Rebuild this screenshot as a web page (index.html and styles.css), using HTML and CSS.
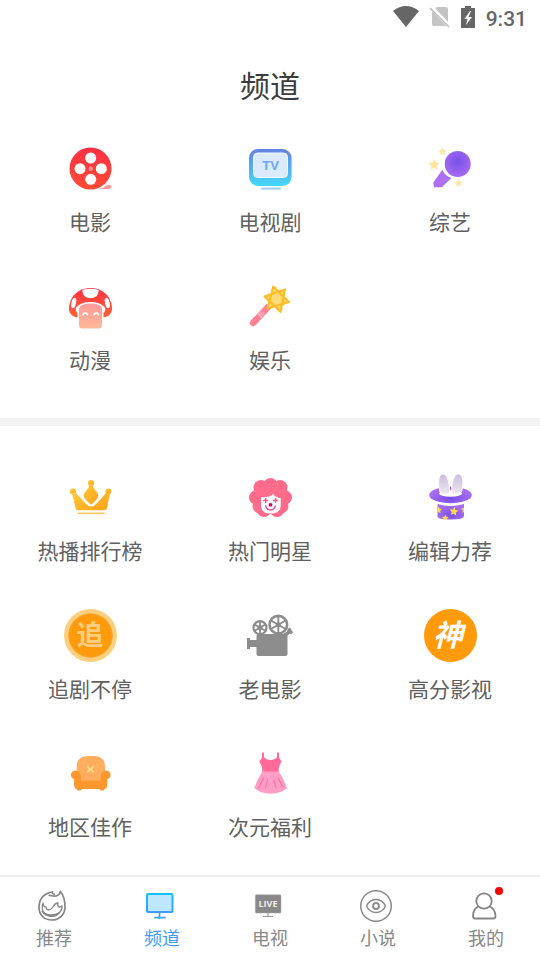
FILE: index.html
```html
<!DOCTYPE html>
<html lang="zh-CN">
<head>
  <meta charset="UTF-8">
  <meta name="viewport" content="width=device-width, initial-scale=1.0">
  <title>频道</title>
  <link rel="stylesheet" href="styles.css">
</head>
<body>

<div class="status-bar">
  <svg width="26" height="22" viewBox="0 0 26 22"><path d="M0 5Q13-5 26 5L13 21z" fill="#666"/></svg>
  <svg width="20" height="22" viewBox="0 0 20 22">
    <path d="M7 1h9q2 0 2 2v15q0 2-2 2H4q-2 0-2-2V6z" fill="#c4c4c4"/>
    <path d="M1 1l18 19" stroke="#fff" stroke-width="4"/>
    <path d="M0 2l19 19" stroke="#bbb" stroke-width="1.6"/>
  </svg>
  <svg width="14" height="22" viewBox="0 0 14 22">
    <path d="M4 0h6v2h4v20H0V2h4z" fill="#666"/>
    <path d="M9 5L3.500 13h3L5 19l6-8H7.500L10 5z" fill="#fff"/>
  </svg>
  <span class="time">9:31</span>
</div>

<main>
  <h1>频道</h1>

  <div class="grid">
    <a class="item" href="#">
      <svg class="icon" viewBox="0 0 54 54">
        <defs><linearGradient id="red" x1="0" y1="0" x2="0" y2="1"><stop offset="0" stop-color="#ff3045"/><stop offset="1" stop-color="#ff4b35"/></linearGradient></defs>
        <path d="M36 48q5-1 8-4 4-1 4.500 1.500 0 2.500-3 2.500z" fill="#ff9b98"/>
        <circle cx="27.500" cy="27.500" r="21" fill="url(#red)"/>
        <g fill="#fff"><circle cx="27.700" cy="17" r="5.500"/><circle cx="17" cy="27.700" r="5.500"/><circle cx="38.300" cy="27.700" r="5.500"/><circle cx="27.700" cy="38.300" r="5.500"/></g>
        <circle cx="27.700" cy="27.700" r="2.200" fill="#ff8f8f"/>
      </svg>
      <span>电影</span>
    </a>
    <a class="item" href="#">
      <svg class="icon" viewBox="0 0 54 54">
        <defs><linearGradient id="tv" x1="0" y1="0" x2="0" y2="1"><stop offset="0" stop-color="#6283e2"/><stop offset="1" stop-color="#45d9fa"/></linearGradient></defs>
        <rect x="6" y="8" width="42.600" height="37" rx="9" fill="url(#tv)"/>
        <rect x="10.500" y="12" width="34" height="24.500" rx="4" fill="#dbeaff" stroke="#f2f8ff"/>
        <text class="tv-text" x="27.500" y="28.500" text-anchor="middle" fill="#6ca5fa">TV</text>
        <path d="M19 47.700h18" stroke="#a5d2ff" stroke-width="2.200" stroke-linecap="round"/>
      </svg>
      <span>电视剧</span>
    </a>
    <a class="item" href="#">
      <svg class="icon" viewBox="0 0 54 54">
        <defs>
          <radialGradient id="mic" cy=".4"><stop offset="0" stop-color="#7650e8"/><stop offset="1" stop-color="#a067ef"/></radialGradient>
          <path id="star" d="M0-5L1.500-1.800 5-1.500 2.400 1 3.100 4.500 0 2.700-3.100 4.500-2.400 1-5-1.500-1.500-1.800z"/>
        </defs>
        <path d="M19.300 28.700Q22 35 28.500 37L20 45q-1 2-3 1l-1.500.5-2-.5-2.500.5-.7-5z" fill="#ae6ff2"/>
        <circle cx="34.700" cy="23" r="13" fill="url(#mic)"/>
        <g fill="#ffe5a0"><use href="#star" transform="translate(11 23.500) scale(1.150)"/><use href="#star" transform="translate(19.300 10.500) scale(.8)"/><use href="#star" transform="translate(35.500 42) scale(.8)"/></g>
      </svg>
      <span>综艺</span>
    </a>
    <a class="item" href="#">
      <svg class="icon" viewBox="0 0 54 54">
        <defs>
          <linearGradient id="cap" x1="0" y1="0" x2="0" y2="1"><stop offset="0" stop-color="#ff3044"/><stop offset="1" stop-color="#ff6334"/></linearGradient>
          <linearGradient id="stem" x1="0" y1="0" x2="0" y2="1"><stop offset="0" stop-color="#ff9a9a"/><stop offset="1" stop-color="#ffb996"/></linearGradient>
        </defs>
        <path d="M15 38.700C9 38 6 34 6 30 6 18 15 9 27.500 9S49 18 49 30q0 7-9 8.700z" fill="url(#cap)"/>
        <path d="M19.500 11q8-2.500 16 0c1 11-17 11-16 0z" fill="#fff"/>
        <ellipse cx="10.700" cy="24" rx="2.300" ry="5.300" transform="rotate(12 10.700 24)" fill="#fff"/>
        <ellipse cx="44.300" cy="24" rx="2.300" ry="5.300" transform="rotate(-12 44.300 24)" fill="#fff"/>
        <path d="M14.500 40V34q-3-3-1-6 5-5 14-5t14 5q2 3-1 6v6z" fill="#fff"/>
        <path d="M16 29q2-4.500 11.500-4.500T39 29v17q0 3.500-3.500 3.500h-16Q16 49.500 16 46z" fill="url(#stem)"/>
        <path d="M20 36.500c0-3.500 4.500-3.500 4.500 0M31 36.500c0-3.500 4.500-3.500 4.500 0" fill="none" stroke="#fff" stroke-width="1.500"/>
      </svg>
      <span>动漫</span>
    </a>
    <a class="item" href="#">
      <svg class="icon" viewBox="0 0 54 54">
        <path d="M10 44L26 27" stroke="#ff8294" stroke-width="6.500"/>
        <path d="M10 44l.5-.5" stroke="#ff8294" stroke-width="6.500" stroke-linecap="round"/>
        <path d="M17 36L20 33" stroke="#ff9dad" stroke-width="5"/>
        <path d="M14.500 34.500l4.500 4" stroke="#ffc0ca" stroke-width="1.300"/>
        <path d="M30.300 7.500L46 23 24.500 29.500z M42 10.500L37.500 32.800 21.500 17.500z" fill="#ffda76" stroke="#ffbd25" stroke-width="2.200" stroke-linejoin="round"/>
      </svg>
      <span>娱乐</span>
    </a>
  </div>

  <div class="grid more">
    <a class="item" href="#">
      <svg class="icon" viewBox="0 0 54 54">
        <defs><linearGradient id="gold" x1="0" y1="0" x2="1" y2="1"><stop offset="0" stop-color="#ffc83b"/><stop offset="1" stop-color="#ffa116"/></linearGradient></defs>
        <g fill="url(#gold)">
          <circle cx="10" cy="21.500" r="3"/><circle cx="28" cy="13" r="3"/><circle cx="45.300" cy="21.500" r="3"/>
          <path d="M9 23l3-1 10 11q6 7 12 0l10-11 3 1-3 15q-.5 2.300-3 2.300H15.500q-2.500 0-3-2.300z"/>
          <path d="M26.800 14h2.400q.8 4 3.800 7c3 3 3 6 0 9l-4 4q-1 .8-2 0l-4-4c-3-3-3-6 0-9q3-3 3.800-7z"/>
        </g>
        <path d="M15.500 43.300H41" stroke="#ffc866" stroke-width="1.800" stroke-linecap="round"/>
      </svg>
      <span>热播排行榜</span>
    </a>
    <a class="item" href="#">
      <svg class="icon" viewBox="0 0 54 54">
        <g fill="#ff6b8b"><circle cx="27.500" cy="15" r="7"/><circle cx="18" cy="17.500" r="7.500"/><circle cx="37" cy="17.500" r="7.500"/><circle cx="13.200" cy="27.500" r="7.200"/><circle cx="41.800" cy="27.500" r="7.200"/><circle cx="17" cy="36" r="7.500"/><circle cx="38" cy="36" r="7.500"/><circle cx="21" cy="39.500" r="7.500"/><circle cx="34" cy="39.500" r="7.500"/><circle cx="27.500" cy="28" r="16"/></g>
        <path d="M18 27q8 1 12-3 3 4 7.700 4v7q0 8.500-10 8.500T18 35z" fill="#fff"/>
        <path d="M20.200 30.500h5M22.700 28v5M30 30.500h5M32.500 28v5" stroke="#f05a87" stroke-width="1.400"/>
        <circle cx="27.500" cy="34.800" r="1.900" fill="#c40f62"/>
        <path d="M22.500 35.500q1 4.500 5 4.500t5-4.500" fill="none" stroke="#e44aa2" stroke-width="1.400"/>
      </svg>
      <span>热门明星</span>
    </a>
    <a class="item" href="#">
      <svg class="icon" viewBox="0 0 54 54">
        <defs>
          <linearGradient id="ear" x1="0" y1="0" x2="0" y2="1"><stop offset="0" stop-color="#c8bdde"/><stop offset="1" stop-color="#eee8ee"/></linearGradient>
          <radialGradient id="hat" cx=".5" cy=".7"><stop offset="0" stop-color="#754ee6"/><stop offset="1" stop-color="#a56bf0"/></radialGradient>
          <clipPath id="hat-clip"><path d="M14.500 34q13 4 26.500 0v12q0 3.500-13.500 3.500T14.500 46z"/></clipPath>
        </defs>
        <ellipse cx="27.500" cy="25" rx="21.300" ry="8.300" fill="url(#hat)"/>
        <ellipse cx="27.500" cy="23.500" rx="11.500" ry="3.300" fill="#fff"/>
        <circle cx="27.500" cy="18" r="1.200" fill="#7d56e8"/>
        <path d="M17 22C14 11 16 4 20 4s7 8 6.500 19q-4 3-9.500-1z" fill="url(#ear)" stroke="#fff"/>
        <path d="M38.500 22c3-11 1-18-3-18S28 12 28.700 23q4 3 9.800-1z" fill="url(#ear)" stroke="#fff"/>
        <g clip-path="url(#hat-clip)"><path d="M14 33h28v17H14z" fill="url(#hat)"/><g fill="#ffd84b"><use href="#star" transform="translate(31 41.300) rotate(8) scale(.9)"/><use href="#star" transform="translate(15.500 40) scale(.7)"/><use href="#star" transform="translate(22.300 48) scale(.7)"/><use href="#star" transform="translate(41.500 39.500) scale(.7)"/></g></g>
      </svg>
      <span>编辑力荐</span>
    </a>
    <a class="item" href="#">
      <svg class="icon" viewBox="0 0 54 54">
        <circle cx="27.500" cy="27.500" r="26.500" fill="#ffcf80"/>
        <circle cx="27.500" cy="27.500" r="21.700" fill="#ff9b0b" stroke="#f3a226"/>
        <text class="badge-text" x="27" y="37" text-anchor="middle" fill="#ffcf80">追</text>
      </svg>
      <span>追剧不停</span>
    </a>
    <a class="item" href="#">
      <svg class="icon" viewBox="0 0 54 54">
        <g fill="#8c8c8c">
          <path d="M4 30h3v2h6.500v-4q0-2 2-2H40l4-2.500 1-3 2-1 3 5-1.500 1.500-2-.3-2 2V46q0 2-2 2h-27q-2 0-2-2v-7H7v2H4z"/>
          <circle cx="17" cy="19.700" r="2.500"/><circle cx="35.300" cy="16.700" r="2.500"/>
        </g>
        <g fill="none" stroke="#8c8c8c">
          <circle cx="17" cy="19.700" r="6.500" stroke-width="2.200"/><circle cx="35.300" cy="16.700" r="8.800" stroke-width="2.600"/>
          <path d="M17 13v13.400M11.200 16.300l11.600 6.700M11.200 23l11.600-6.700M35.300 7.700v18M27.500 12.200l15.600 9M27.500 21.200l15.600-9" stroke-width="1.900"/>
        </g>
      </svg>
      <span>老电影</span>
    </a>
    <a class="item" href="#">
      <svg class="icon" viewBox="0 0 54 54">
        <circle cx="27.500" cy="27.500" r="26.500" fill="#ff9b0b"/>
        <text class="badge-text script" x="25" y="38" text-anchor="middle" fill="#fff">神</text>
      </svg>
      <span>高分影视</span>
    </a>
    <a class="item" href="#">
      <svg class="icon" viewBox="0 0 54 54">
        <path d="M13.700 37V21q0-11 11-11h6Q42 10 42 21v16z" fill="#ffae60"/>
        <path d="M11 33q-3-1-3-4 0-4 4-4.500 6 0 6 7v3.300h19.500v-3.300q0-7 6-7 4 .5 4 4.500 0 3-3.200 4v6q0 3-2.500 4l-1 1.500h-3L36.500 43H19l-1.500 1.500h-3l-1-1.500Q11 42 11 39z" fill="#ff962e"/>
        <path d="M24.500 20.500l2 2v1.600l-2 2M30.500 20.500l-2 2v1.600l2 2M26 23.300h3" fill="none" stroke="#ffe18d" stroke-width="1.700"/>
      </svg>
      <span>地区佳作</span>
    </a>
    <a class="item" href="#">
      <svg class="icon" viewBox="0 0 54 54">
        <path d="M19.500 25Q14 34 11.300 42q6 5.700 16.300 5.700T44 42q-3-8-8.300-17z" fill="#ff9dc5"/>
        <path d="M19 7q1-1.500 2 0v4q2 3 6.500 3t6.500-3V7q1-1.500 2 0v4.500l2.500 4q-3 4.500-3 10h-16q0-5.500-3.200-10l2.700-4z" fill="#ff6a98"/>
        <path d="M20.500 32l-5 10M24.500 34l-2 8M31 34l2 8M35 32l5 9" stroke="#ff72a8" stroke-width="1.200" stroke-linecap="round"/>
      </svg>
      <span>次元福利</span>
    </a>
  </div>
</main>

<nav class="tabs">
  <a href="#">
    <svg viewBox="0 0 32 32" fill="none" stroke="#858585" stroke-linejoin="round">
      <path d="M15 1.800C5 3 1 10 1 17c0 8 5 13 13 13s13-6 13-13c0-7-1-11-4.500-15.500-1 3-3 4.500-5 4.500-3 .5-5-1-7-.5" stroke-width="1.700"/>
      <path d="M15 1.800q-2 2.200 2 2.500" stroke-width="1.500"/>
      <path d="M5 13c-2 7 0 12 8 12 7 0 11-3 11-9-3 2-5 1-4-3-4 0-4 3-6 5-2 3-6 2-6-1-2 0-3-2-3-4zM4 21c3 6 14 8 18 1" stroke-width="1.300"/>
    </svg>
    <span>推荐</span>
  </a>
  <a class="active" href="#">
    <svg viewBox="0 0 32 32">
      <defs><linearGradient id="screen" x1="0" y1="0" x2="0" y2="1"><stop offset="0" stop-color="#12c0fb"/><stop offset="1" stop-color="#3d9cff"/></linearGradient></defs>
      <rect x="1" y="4" width="25.500" height="18" rx="1" fill="#bde7ff" stroke="url(#screen)" stroke-width="2"/>
      <path d="M13.500 23v5M9 27.700h10" stroke="#38a8ff" stroke-width="1.800" stroke-linecap="round"/>
    </svg>
    <span>频道</span>
  </a>
  <a href="#">
    <svg viewBox="0 0 32 32">
      <rect x="1.300" y="4.700" width="25.700" height="18.300" rx="1" fill="#888" stroke="#aaa" stroke-width=".5"/>
      <path d="M14 23v3.500M9 26.500h10" stroke="#999" stroke-width="1.200"/>
      <text class="live-text" x="14" y="17" text-anchor="middle" fill="#eee">LIVE</text>
    </svg>
    <span>电视</span>
  </a>
  <a href="#">
    <svg viewBox="0 0 32 32" fill="none" stroke="#8a8a8a" stroke-width="1.500">
      <circle cx="14" cy="16" r="15.300"/>
      <path d="M4.500 16q3-6.500 9.500-6.500t9.500 6.500q-3 6.500-9.500 6.500T4.500 16z"/>
      <circle cx="14" cy="16" r="3" stroke-width="1.800"/>
    </svg>
    <span>小说</span>
  </a>
  <a href="#">
    <svg viewBox="0 0 32 32" fill="none" stroke="#858585" stroke-width="1.800">
      <circle cx="14" cy="11" r="7.700"/>
      <path d="M7.500 17Q3 20 3 26q0 2.500 2 2.500h18.500q2 0 2-2.500 0-6-5-9" stroke-linecap="round"/>
    </svg>
    <i class="dot"></i>
    <span>我的</span>
  </a>
</nav>

</body>
</html>
```

FILE: styles.css
```css
* {
  box-sizing: border-box;
}

body {
  font-family: Roboto, "Noto Sans CJK SC", sans-serif;
  background-color: #fff;
  color: #606060;
  margin: 0;
  min-height: 100vh;
  display: flex;
  flex-direction: column;
}

a {
  color: inherit;
  text-decoration: none;
}

svg {
  display: block;
  overflow: visible;
}

.status-bar {
  display: flex;
  align-items: center;
  justify-content: flex-end;
  gap: 11px;
  height: 36px;
  padding-right: 13px;
}

.time {
  font-size: 21px;
  font-weight: 500;
  line-height: 24px;
  padding-top: 1px;
  color: #666;
}

.status-bar svg {
  margin-bottom: 2px;
}

main {
  flex: 1;
}

h1 {
  margin: 0;
  padding: 29px 0 14px;
  font-size: 30px;
  font-weight: 400;
  line-height: 44px;
  text-align: center;
  color: #3c3c3c;
}

.grid {
  display: grid;
  grid-template-columns: repeat(3, 1fr);
  padding-bottom: 19px;
}

.more {
  border-top: 8px solid #f2f2f2;
  padding-top: 26px;
  padding-bottom: 8px;
}

.item {
  display: flex;
  flex-direction: column;
  align-items: center;
  gap: 13px;
  padding: 18px 0 23px;
  font-size: 21px;
  line-height: 30px;
}

.icon {
  width: 54px;
  height: 54px;
}

.tv-text {
  font: bold 13px "Liberation Sans", sans-serif;
}

.badge-text {
  font: bold 27px "Noto Sans CJK SC", sans-serif;
}

.script {
  font-size: 30px;
  font-style: italic;
}

.live-text {
  font: bold 9px "Open Sans", sans-serif;
}

.tabs {
  display: grid;
  grid-template-columns: repeat(5, 1fr);
  border-top: 2px solid #eee;
  padding: 13px 0 7px;
  background-color: #fff;
}

.tabs a {
  position: relative;
  display: flex;
  flex-direction: column;
  align-items: center;
  gap: 3px;
  font-size: 18px;
  line-height: 28px;
  color: #888;
}

.tabs svg {
  width: 32px;
  height: 32px;
}

.tabs .active {
  color: #3d9cff;
}

.dot {
  position: absolute;
  top: -3px;
  left: calc(50% + 9px);
  width: 8px;
  height: 8px;
  border-radius: 50%;
  background-color: #f00;
}
```
